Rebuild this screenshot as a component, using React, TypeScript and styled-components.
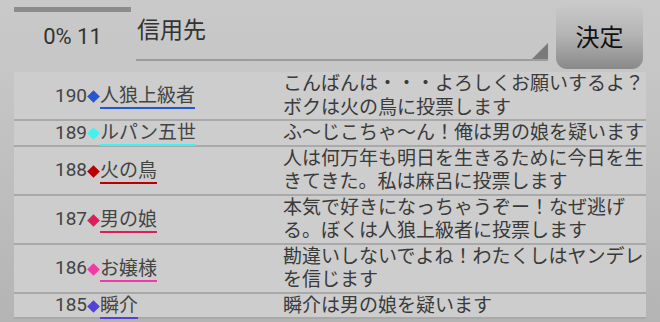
import styled, { createGlobalStyle } from "styled-components";

const GlobalStyle = createGlobalStyle`
  html, body {
    margin: 0;
    padding: 0;
    height: 100%;
    overflow: hidden;
  }
  body {
    background: linear-gradient(#c9c9c9, #c6c6c6 72px, #b4b4b4 322px);
    font-family: Roboto, "Noto Sans CJK JP", sans-serif;
  }
`;

const Screen = styled.div`
  width: 660px;
  height: 322px;
  overflow: hidden;
`;

const Header = styled.div`
  display: flex;
  height: 72px;
  padding: 0 17px 0 14px;
  box-sizing: border-box;
`;

const Progress = styled.div`
  width: 117px;
  display: flex;
  flex-direction: column;
  align-items: center;
`;

const ProgressBar = styled.div`
  align-self: stretch;
  height: 5px;
  margin-top: 7px;
  background: #8c8c8c;
`;

const ProgressText = styled.div`
  margin-top: 12px;
  font-size: 22px;
  line-height: 26px;
  color: #333;
`;

const Spinner = styled.div`
  position: relative;
  flex: 1;
  margin: 0 8px 0 5px;
  height: 61px;
  border-bottom: 2px solid #9c9c9c;
  padding: 15px 0 0 1px;
  box-sizing: border-box;
  font-size: 23px;
  line-height: 32px;
  color: #333;

  &::after {
    content: "";
    position: absolute;
    right: 0;
    bottom: 0;
    border-style: solid;
    border-width: 0 0 16px 16px;
    border-color: transparent transparent #7a7a7a transparent;
  }
`;

const DecideButton = styled.button`
  width: 87px;
  height: 68px;
  margin-top: 1px;
  border: none;
  border-radius: 11px;
  background: linear-gradient(#cbcbcb, #b4b4b4 50%, #898989);
  font-family: "Noto Sans CJK JP", sans-serif;
  font-size: 24px;
  color: #111;
  padding: 0;
`;

const List = styled.div`
  margin: 0 14px;
  background: #cdcdcd;
`;

const Row = styled.div`
  display: grid;
  grid-template-columns: 269px 1fr;
  border-bottom: 2px solid #a9a9a9;
`;

const Speaker = styled.div`
  display: flex;
  align-items: center;
  padding-left: 41px;
  font-size: 19px;
  color: #444;
`;

const Number = styled.span`
  line-height: 20px;
`;

const Mark = styled.span<{ $color: string }>`
  display: inline-flex;
  justify-content: center;
  align-items: center;
  width: 13px;
  height: 20px;

  &::before {
    content: "";
    width: 9px;
    height: 9px;
    margin-top: 2px;
    background: ${(p) => p.$color};
    transform: rotate(45deg);
  }
`;

const Name = styled.span<{ $color: string }>`
  line-height: 20px;
  padding-top: 2px;
  padding-bottom: 1px;
  border-bottom: 2px solid ${(p) => p.$color};
  margin-bottom: -2px;
`;

const Message = styled.div`
  font-size: 19px;
  line-height: 23.5px;
  color: #3a3a3a;
  line-break: strict;
`;

interface Post {
  no: number;
  name: string;
  color: string;
  text: string;
}

const posts: Post[] = [
  { no: 190, name: "人狼上級者", color: "#2457d0", text: "こんばんは・・・よろしくお願いするよ？ボクは火の鳥に投票します" },
  { no: 189, name: "ルパン五世", color: "#45f0ee", text: "ふ～じこちゃ～ん！俺は男の娘を疑います" },
  { no: 188, name: "火の鳥", color: "#b80000", text: "人は何万年も明日を生きるために今日を生きてきた。私は麻呂に投票します" },
  { no: 187, name: "男の娘", color: "#dc1f5a", text: "本気で好きになっちゃうぞー！なぜ逃げる。ぼくは人狼上級者に投票します" },
  { no: 186, name: "お嬢様", color: "#f03aa8", text: "勘違いしないでよね！わたくしはヤンデレを信じます" },
  { no: 185, name: "瞬介", color: "#5540dc", text: "瞬介は男の娘を疑います" },
];

export default function App() {
  return (
    <Screen>
      <GlobalStyle />
      <Header>
        <Progress>
          <ProgressBar />
          <ProgressText>0% 11</ProgressText>
        </Progress>
        <Spinner>信用先</Spinner>
        <DecideButton type="button">決定</DecideButton>
      </Header>
      <List>
        {posts.map((p) => (
          <Row key={p.no}>
            <Speaker>
              <Number>{p.no}</Number>
              <Mark $color={p.color} />
              <Name $color={p.color}>{p.name}</Name>
            </Speaker>
            <Message>{p.text}</Message>
          </Row>
        ))}
      </List>
    </Screen>
  );
}
